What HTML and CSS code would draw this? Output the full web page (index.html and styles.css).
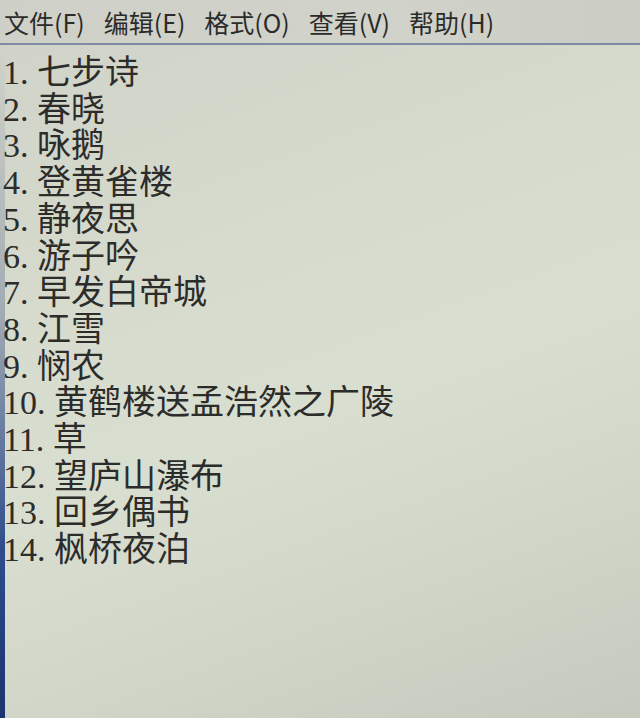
FILE: index.html
```html
<!DOCTYPE html>
<html lang="zh-CN">
<head>
<meta charset="utf-8">
<title>记事本</title>
<link rel="stylesheet" href="styles.css">
</head>
<body>
<div class="window">
  <div class="menubar">
    <span class="menu">文件(F)</span>
    <span class="menu">编辑(E)</span>
    <span class="menu">格式(O)</span>
    <span class="menu">查看(V)</span>
    <span class="menu">帮助(H)</span>
  </div>
  <div class="editor">
    <div class="line">1. 七步诗</div>
    <div class="line">2. 春晓</div>
    <div class="line">3. 咏鹅</div>
    <div class="line">4. 登黄雀楼</div>
    <div class="line">5. 静夜思</div>
    <div class="line">6. 游子吟</div>
    <div class="line">7. 早发白帝城</div>
    <div class="line">8. 江雪</div>
    <div class="line">9. 悯农</div>
    <div class="line">10. 黄鹤楼送孟浩然之广陵</div>
    <div class="line">11. 草</div>
    <div class="line">12. 望庐山瀑布</div>
    <div class="line">13. 回乡偶书</div>
    <div class="line">14. 枫桥夜泊</div>
  </div>
  <div class="edge"></div>
</div>
</body>
</html>
```
FILE: styles.css
```css
html, body {
  margin: 0;
  padding: 0;
  width: 640px;
  height: 718px;
  overflow: hidden;
}
.window {
  position: relative;
  width: 640px;
  height: 718px;
  background: linear-gradient(160deg, #d0d2c8 0%, #d6dbcd 35%, #d9dfd0 55%, #d0d4c7 80%, #c6c9be 100%);
  display: flex;
  flex-direction: column;
}
.menubar {
  height: 45px;
  box-sizing: border-box;
  display: flex;
  align-items: center;
  gap: 19px;
  padding: 1px 0 0 4px;
  border-bottom: 2px solid #7f8ba0;
  font-family: "Noto Sans CJK SC", "Noto Sans", sans-serif;
  font-size: 25px;
  color: #2b2b2b;
  background: linear-gradient(90deg, #cfd0c8, #d1d3ca 60%, #cbcdc4);
}
.editor {
  padding: 10px 0 0 3px;
  font-family: "Liberation Serif", "Noto Sans CJK SC", serif;
  font-size: 34px;
  line-height: 36.7px;
  color: #2c2c2a;
}
.line {
  white-space: pre;
}
.edge {
  position: absolute;
  left: 0;
  top: 47px;
  bottom: 0;
  width: 5px;
  background: linear-gradient(180deg, rgba(60,80,130,0) 0%, rgba(60,80,130,0.35) 40%, #2e4c8c 75%, #1c3470 100%);
}
```
